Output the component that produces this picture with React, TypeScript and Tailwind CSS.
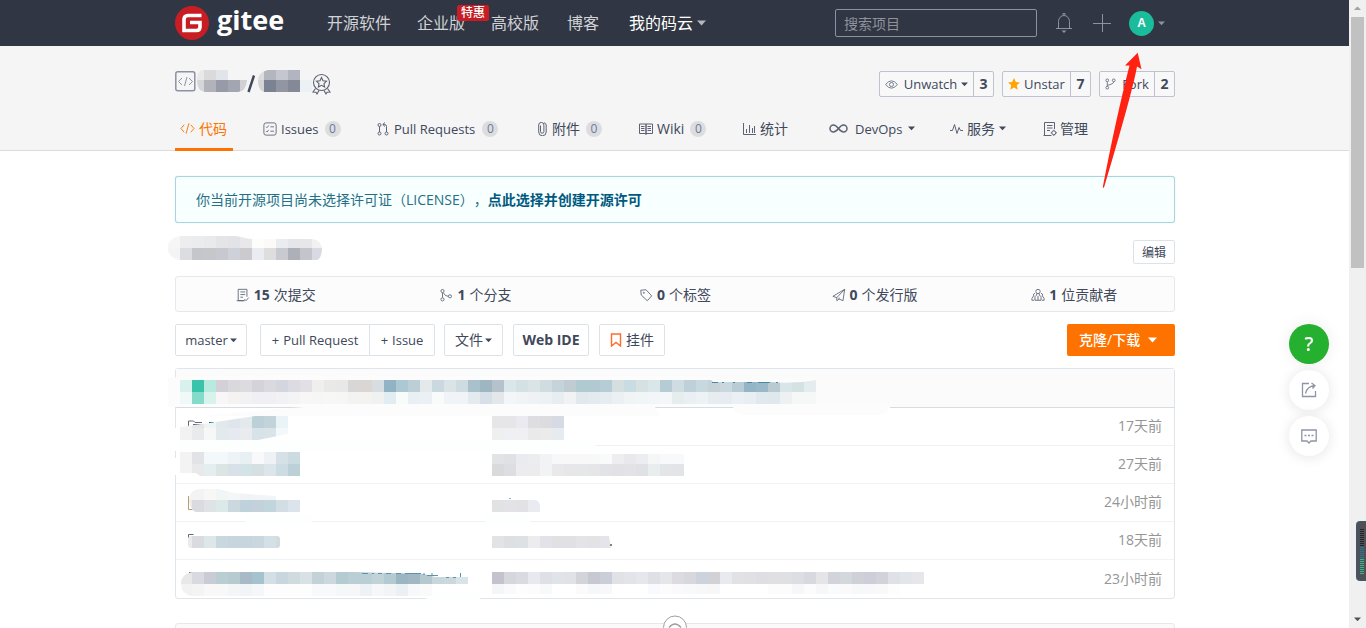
import React from "react";

type IconProps = { className?: string; children: React.ReactNode; box?: string };

function Icon({ className = "size-4", children, box = "0 0 16 16" }: IconProps) {
  return (
    <svg viewBox={box} className={`shrink-0 ${className}`} fill="none" stroke="currentColor" strokeWidth="1" aria-hidden="true">
      {children}
    </svg>
  );
}

function Caret({ className = "w-2" }: { className?: string }) {
  return (
    <svg viewBox="0 0 8 5" className={`shrink-0 ${className}`} fill="currentColor" aria-hidden="true">
      <path d="M0 .5h8L4 4.8z" />
    </svg>
  );
}

function Cells({ x, y, h = 12, colors }: { x: number; y: number; h?: number; colors: string }) {
  return (
    <g shapeRendering="crispEdges">
      {colors.split(" ").map((c, i) =>
        c === "-" ? null : <rect key={i} x={x + i * 12} y={y} width="12" height={h} fill={`#${c}`} />,
      )}
    </g>
  );
}

function CodeGlyph() {
  return <path d="M4.500 4L1 8l3.500 4M11.500 4L15 8l-3.500 4M9.500 2.500l-3 11" />;
}

const tabs = [
  {
    label: "Issues", count: 0, width: "w-[114px]", gap: "gap-1", size: "text-[13px]",
    icon: (
      <Icon className="size-[14px] text-[#5c6375]">
        <rect x="1" y="1" width="14" height="14" rx="2.500" />
        <path d="M3.500 5.500l1 1 2-2.500M3.500 10.500l1 1 2-2.500M8.500 5.500h4M8.500 10.500h4" />
      </Icon>
    ),
  },
  {
    label: "Pull Requests", count: 0, width: "w-[160px]", gap: "gap-[5px]", size: "text-[13px]",
    icon: (
      <Icon className="w-3 h-[14px] text-[#5c6375]" box="0 0 12 14">
        <circle cx="2.500" cy="3" r="1.500" /><circle cx="2.500" cy="11.500" r="1.500" /><circle cx="9.500" cy="11.500" r="1.500" />
        <path d="M2.500 4.500V10M9.500 10V4.500Q9.500 2.500 7.500 2.500H6M8 .5L5.800 2.500 8 4.500" />
      </Icon>
    ),
  },
  {
    label: "附件", count: 0, width: "w-[102px]", gap: "gap-1", size: "text-sm",
    icon: (
      <Icon className="w-[11px] h-[14px] text-[#5c6375]" box="0 0 11 14">
        <path d="M3.500 3.500v6a1.700 1.700 0 0 0 3.400 0V3a2.600 2.600 0 0 0-5.200 0v7a3.700 3.700 0 0 0 7.500 0V3Q9 1 7 .8" />
      </Icon>
    ),
  },
  {
    label: "Wiki", count: 0, width: "w-[103px]", gap: "gap-1", size: "text-sm",
    icon: (
      <Icon className="w-[14px] h-3 text-[#5c6375]" box="0 0 14 12">
        <path d="M.5 1h6.500v9.500H.5zM7 1h6.500v9.500H7zM2 3.500h3.500M2 5.500h3.500M2 7.500h3.500M8.500 3.500H12M8.500 5.500H12M8.500 7.500H12M7 10v2" />
      </Icon>
    ),
  },
  {
    label: "统计", width: "w-[87px]", gap: "gap-1", size: "text-sm",
    icon: (
      <Icon className="w-[14px] h-3 text-[#5c6375]" box="0 0 14 12">
        <path d="M1.500 0v11.500H14M4.500 10V6M7.500 10V2M10.500 10V5M12.500 10V3" />
      </Icon>
    ),
  },
  {
    label: "DevOps", menu: true, width: "w-[121px]", gap: "gap-[5px]", size: "text-[13px]",
    icon: (
      <Icon className="mr-0.5 w-[19px] h-[9px] text-[#5c6375]" box="0 0 19 9">
        <path strokeWidth="1.500" d="M9.500 4.500C7.500 2 6.500 1 4.500 1a3.500 3.500 0 0 0 0 7c2 0 3-1 5-3.500s3-3.500 5-3.500a3.500 3.500 0 0 1 0 7c-2 0-3-1-5-3.500z" />
      </Icon>
    ),
  },
  {
    label: "服务", menu: true, width: "w-[93px]", gap: "gap-1", size: "text-sm",
    icon: (
      <Icon className="w-[13px] h-3 text-[#5c6375]" box="0 0 13 12">
        <path d="M0 7.500h2.500l2-6 2.500 9 2-6 1.500 3H13" />
      </Icon>
    ),
  },
  {
    label: "管理", width: "w-[60px]", gap: "gap-[3px]", size: "text-sm",
    icon: (
      <Icon className="size-[14px] text-[#5c6375]" box="0 0 14 14">
        <path d="M11.500 7V.5H1.500v13H8M.5 13.500h8M4 3.500h5.500M4 6h5.500M4 8.500h3" />
        <circle cx="10.800" cy="10.800" r="2" />
        <path d="M10.800 7.800v1M10.800 12.800v1M7.800 10.800h1M12.800 10.800h1" />
      </Icon>
    ),
  },
];

const stats = [
  {
    n: 15, label: "次提交",
    icon: <path d="M12.500 10V1.500h-10v13H10M.8 14.500H9M5 4.500h5.500M5 7.500h5.500M5 10.500h3M9.500 12.500l2 2 3-3.500" />,
  },
  {
    n: 1, label: "个分支",
    icon: (
      <>
        <circle cx="4" cy="3.500" r="1.800" /><circle cx="4" cy="13" r="1.800" /><circle cx="12.500" cy="9.500" r="1.800" />
        <path d="M4 5.500V11M5 5.500Q7 9.500 10.500 9.500" />
      </>
    ),
  },
  {
    n: 0, label: "个标签",
    icon: <><path d="M2 2.500l6-.5 6.500 7-5 5.500L2.500 8z" /><circle cx="5.500" cy="5.500" r=".6" /></>,
  },
  { n: 0, label: "个发行版", icon: <path d="M14.500 1.500L1 9.500l4.500 1.500v3.500l2.500-2 4.500 2zM14.500 1.500L5.500 11M8 12.500v-1.500" /> },
  {
    n: 1, label: "位贡献者",
    icon: (
      <>
        <circle cx="8" cy="4" r="2.500" />
        <path d="M6.500 6.500v1.500L4.500 10v4h7v-4l-2-2V6.500M8 9v5" />
        <path d="M4.500 6Q2 6.500 3 9L1 12v2h2.500M11.500 6q2.500.5 1.500 3l2 3v2h-2.500" />
      </>
    ),
  },
];

const files = ["17天前", "27天前", "24小时前", "18天前", "23小时前"];

function TableMask() {
  return (
    <svg viewBox="168 368 1008 236" className="pointer-events-none absolute -left-2 -top-px h-[236px] w-[1008px]" aria-hidden="true">
      <path d="M168 378Q200 374 400 376H700Q712 377 714 382L816 380V404H892Q888 415 876 415H744Q736 415 733 407H655L660 416H200Q240 412 305 407H168z" fill="#fbfcfb" />
      <path d="M174 428H182V451H172zM168 458H180V475H174z" fill="#fff" />
      <path d="M222 441H595V451H180V441zM245 516H312V523H245zM418 593H480V601H430zM485 516H530V523H485z" fill="#fdfefe" />
      <path d="M188.500 426v-5h5l1.500 1.500h7M193 424.500h10" stroke="#6a6674" fill="none" />
      <path d="M209 422.500h5" stroke="#005980" />
      <path d="M188.500 496v13.500h4" stroke="#b99b72" fill="none" />
      <path d="M188.500 540v-5.500h5" stroke="#6a6674" fill="none" />
      <path d="M189 572.500h8" stroke="#6a6674" />
      <g>
        <Cells x={180} y={380} colors="d8f1ec 39c3aa b8eadf d3d1d7 d9d8dc dcdce0 d4d3d9 d9d9de d3d6df dcdbe1 e2e0e6 efefee eae9ea e8e8e8 d8d6d6 dad6d3 d6dee1 91b3c4 acc8d2 bccfd6 e4e9ec cad8df dae3e5 cedbe0 a9c1cb 9db6c0 b6c2cb d9e7eb d3e1e5 dae3e5 d0dde0 c5d4da bfcdd2 b1cad1 b1cad1 b7cdd5 d6dfdf c8dce3 d8e1e2 d9e7eb b6ccd5 cfdde3 bed1da c8d8df c5d2d8 c9d8df b7ccd4 93b5c6 9ab9c8 b9cbd1 d9e6e9 d4e2e3 e4ecee" />
        <Cells x={180} y={392} colors="eff9f7 84dbc9 daf2ec f8f6f7 f5f3f2 f2f2f3 f1eff3 f0eff3 f2f2f5 f4f4f7 f8f7f5 f6f6f7 f7f7f5 f6f6f4 f3f3f3 f4f3f0 f0f1f1 e2edf1 f7fbfa e9eff2 eaf0f3 f9fbfa f0f4f6 f0f4f7 e4ebef d7dfe9 e4e7ea f2f6f8 f1f4f5 eff2f5 edf1f3 e7eef1 f1f2f4 e1e9ee e4ebee e6edf0 ebf1f2 f0f4f4 f0f5f5 f3f6f8 f4f7f9 e5edef e9eff2 edf2f4 e6ecf0 e6ecf1 ebf0f4 e9eef3 e0eaee dfe8ec edf1f2 f6f8f7 f6f8f8" />
        <path d="M711 380H817Q795 384 770 382H713z" fill="#fbfcfb" />
        <path d="M712 382.500h6M722 382.500h2M733 382.500h2M747 382.500h5M758 382.500h12M776 382.500h2" stroke="#4c87a3" />
      </g>
      <clipPath id="name-1"><path d="M180 427L216 422L255 416H288V434L258 440H180z" /></clipPath>
      <g clipPath="url(#name-1)">
        <Cells x={180} y={416} colors="f2f2f3 e6e6e8 f0f4f4 e1e9ec dfe6eb e4e9ec bcd0d8 c3d3da eaf3f6" />
        <Cells x={180} y={428} colors="f2f2f2 e9eaec f6f8f7 e2eaec e6eaf0 e8ecef d7e3e8 d9e4e9 f3f8fa" />
      </g>
      <Cells x={492} y={416} colors="e6e6e8 e6e5e8 eaeaf0 dedddf dcdce0 d5dae4" />
      <Cells x={492} y={428} colors="efefef eff0f3 f0f0f3 ebeaeb ebebec e5ebee" />
      <clipPath id="name-2"><path d="M180 452H300V476H200L196 473H180z" /></clipPath>
      <g clipPath="url(#name-2)">
        <Cells x={180} y={452} colors="f3f3f4 e2e3e7 f3f8fa f3f8fa edf3f6 e9f0f3 f9f9fc eef2f4 d5e1e7 ccdbe2" />
        <Cells x={180} y={464} colors="f3f3f3 e9e9eb e5eeee dae5e4 d9e1e8 d4e3e7 d6dfe1 dce5e9 cddce3 bcd0d8" />
      </g>
      <Cells x={492} y={454} h={10} colors="e2e3e5 e0e1e4 eaebf0 ededef f1f3f5 f8f8f8 f8f8f8 f8f8f8 f8f8f8 f9fbfa eeeef0 e8e8ed ededf1 f5f6f6 f8f9fb f8f9fb" />
      <Cells x={492} y={464} colors="d9dadc dddee2 ececee ececef f2f3f5 e9e9eb e7e7e9 e6e7e9 e6e6e8 e2e3e7 e2e2e6 e3e3e7 e0e1e5 e8edee e4e5e9 e3e4e7" />
      <clipPath id="name-3"><path d="M189 500Q190 489 200 489H218L235 493L276 496V500H300V512H196Q190 510 189 500z" /></clipPath>
      <g clipPath="url(#name-3)">
        <Cells x={180} y={488} colors="f3f3f4 f3f3f4 f8f7f6 f0f5f6 f4f6f7 f2f3f6 f2f5f7 f2f5f7" />
        <Cells x={180} y={500} colors="ececec d9dbe0 e0e3e5 dce9e9 cbd8de bfd2db c5d1da c1d5dc d3dee4 dce3ea" />
      </g>
      <clipPath id="note-3"><path d="M492 500H536Q540 502 540 506V512H492z" /></clipPath>
      <g clipPath="url(#note-3)"><Cells x={492} y={500} colors="e1e2e2 e3e3e7 e2e2e4 eaebf0" /></g>
      <path d="M509 498.500h2" stroke="#8db5d8" />
      <clipPath id="name-4"><rect x="188" y="536" width="92" height="12" rx="3" /></clipPath>
      <g clipPath="url(#name-4)"><Cells x={180} y={536} colors="ebebed d9dbe1 dde7ea c9d8df c7d6dd c7d5dc cad7de d3e0e5 d2dcdd e7f5f7" /></g>
      <clipPath id="note-4"><path d="M492 536H609L611 548H492z" /></clipPath>
      <g clipPath="url(#note-4)"><Cells x={492} y={536} colors="e1e3e5 dce0e3 dde1e4 ececee e2e3e8 e1e1e4 e0e0e5 e3e3e8 e3e2e5 e4e4ea" /></g>
      <path d="M610 545h2" stroke="#8b7a88" strokeWidth="2" />
      <clipPath id="name-5"><path d="M192 572H355L424 574L435 577H468V584H445L440 596H192Q181 594 181 584T192 572z" /></clipPath>
      <g clipPath="url(#name-5)">
        <Cells x={180} y={572} colors="e8e8ea d9dae0 c9ccd4 b9ced3 b7cad0 a7bac6 a5c3cf d3dfe4 c8d7de d0dbe0 d8e1e5 c3d2d7 ccd8de b3cbd1 bacfd5 b9ced5 c2d2d9 b3cad2 9bb6c3 a1b8c4 b4c8cf c8d7dc ccd8de d9e4e8" />
        <Cells x={180} y={584} colors="f2f2f2 f4f4f4 f8f8f8 f8f8f9 f3f5f7 f1f5f8 f6f7f9 fdfdfd fdfdfd fdfdfd fdfdfd f8f9fa f8f9fa f5f8f9 f5f7f8 ecf2f5 f5f7f9 f2f5f6 ebf0f4 f7f8fa fafafa" />
      </g>
      <path d="M362 573.500h6M372 573.500h2M378 573.500h4M386 573.500h5M396 573.500h5M405 573.500h16M424 573v2M427 575.500h11M432 573v3M446 577.500h3M453 577.500h3M460.500 573v4" stroke="#5d93ab" />
      <Cells x={492} y={572} colors="c3c2cd d5d7dd dadbe0 e8e9ee dfe0e5 e0e4e8 e1e2e6 d3d4d9 c6c9d2 caced8 e1e2e6 e3e4e9 e6e7ec dfe0e5 e5e6ea dbdbe0 d7d8dd cdd3dd d1d1d6 e7ebf0 e1e2e4 e0e0e5 dfdfe3 e0e0e3 dfe0e3 dddee3 d8d8df e5e5e8 d1d5db d3d8dc d0d0d7 cccfda d2d2da dee2e7 e2e5ea e7e7eb" />
      <Cells x={492} y={584} h={10} colors="f5f6f8 fafafc fdfdfd fcfcfc f8f9fa - - fbfbfb f6f7f9 f8f8fa - - - f9fafd fcfcfc fafafc f8f9fa f8f8fa f7f7f8 - - - - fcfcfc fcfcfc f7f7f9 fcfcfc f6f7f8 fafbfc fafafb f7f8fa f8f8fa f9f9fa fdfdfd" />
    </svg>
  );
}

const btn = "flex h-8 cursor-pointer items-center justify-center border border-[#dce3e8] bg-white text-[#40485b] whitespace-nowrap";

function CountButton({ label, count, icon, menu, width }: { label: string; count: number; icon: React.ReactNode; menu?: boolean; width: string }) {
  return (
    <div className={`flex h-[26px] rounded-xs border border-[#bfc3cf] bg-[#f8f8f9] text-[#40485b] ${width}`}>
      <button type="button" className="flex flex-1 cursor-pointer items-center justify-center gap-1 whitespace-nowrap text-[13px] leading-5">
        {icon}
        <span>{label}</span>
        {menu && <Caret className="w-[7px]" />}
      </button>
      <a href="#" className="flex w-5 items-center justify-center border-l border-[#bfc3cf] text-sm font-bold">{count}</a>
    </div>
  );
}

export default function App() {
  return (
    <div className="flex h-screen overflow-hidden bg-white font-['Open_Sans','Noto_Sans_CJK_SC',sans-serif] text-sm text-[#40485b]">
      <div className="min-w-0 flex-1">
        <header className="h-[46px] bg-[#303643]">
          <div className="mx-auto flex h-full max-w-[1000px] items-center">
            <a href="#" className="flex w-[152px] items-center gap-2 text-white">
              <svg viewBox="0 0 34 34" className="size-[34px]" aria-hidden="true">
                <circle cx="17" cy="17" r="17" fill="#c71d23" />
                <path d="M26.500 9.500H13Q9 9.500 9 13.500V24.500H21.500Q25 24.500 25 21V16.500H15" fill="none" stroke="#fff" strokeWidth="3.600" />
              </svg>
              <span className="pb-1.5 text-[27px] leading-8 font-bold">gitee</span>
            </a>
            <nav className="flex items-center gap-[26px] text-base whitespace-nowrap text-[#d0d2d6]">
              <a href="#">开源软件</a>
              <a href="#" className="relative">
                企业版
                <span className="absolute -top-1.5 left-10 flex h-4 w-8 items-center justify-center rounded-xs bg-[#c71d23] text-xs font-medium text-white">特惠</span>
              </a>
              <a href="#">高校版</a>
              <a href="#" className="pl-0.5">博客</a>
              <a href="#" className="flex items-center gap-1 pl-1 text-white">
                我的码云
                <Caret className="w-[9px] text-[#b4b7bd]" />
              </a>
            </nav>
            <div className="ml-auto flex items-center pr-2.5">
              <input aria-label="搜索项目" placeholder="搜索项目" className="h-7 w-[202px] rounded-xs border border-[#8c92a4] bg-transparent px-2 text-sm text-white outline-none placeholder:text-[#8f929b]" />
              <button type="button" aria-label="通知" className="ml-[18px] cursor-pointer text-[#8c92a0]">
                <Icon className="h-5 w-[18px]" box="0 0 18 20">
                  <path d="M3.500 15.500V8.500a5.500 6 0 0 1 11 0v7M1 15.500h16M8 2V.5h2V2" />
                  <path d="M6.500 17.500h5L9 20z" fill="currentColor" stroke="none" />
                </Icon>
              </button>
              <button type="button" aria-label="新建" className="ml-5 cursor-pointer text-[#8c92a0]">
                <Icon className="size-[18px]" box="0 0 18 18"><path d="M0 9.500h18M9.500 0v18" /></Icon>
              </button>
              <button type="button" aria-label="账户" className="ml-[18px] flex cursor-pointer items-center gap-1 text-[#8c92a0]">
                <span className="flex size-[25px] items-center justify-center rounded-full bg-[#1abc9c] font-['Liberation_Sans',sans-serif] text-xs font-bold text-white">A</span>
                <Caret className="w-[7px]" />
              </button>
            </div>
          </div>
        </header>

        <section className="border-b border-[#dcdde0] bg-[#f5f5f5] pt-6">
          <div className="mx-auto max-w-[1000px]">
            <div className="flex h-7 items-start">
              <svg viewBox="175 70 160 28" className="h-7 w-40" aria-hidden="true">
                <rect x="175.800" y="71.800" width="19" height="19" rx="2" fill="none" stroke="#8c92a4" strokeWidth="1.500" />
                <path d="M182 78l-3.500 3.500L182 85M189 78l3.500 3.500L189 85M187 77l-2.500 9" fill="none" stroke="#8c92a4" />
                <clipPath id="owner"><path d="M205 69H228V80H247Q246 92 238 92H205Q197 91 197 80.500T205 69z" /></clipPath>
                <g clipPath="url(#owner)">
                  <Cells x={192} y={68} colors="e9e9ea d9dad9 e1e4e8" />
                  <Cells x={192} y={80} colors="d6d6d8 b2b3ba 979ba8 a3a5b1 d0d0d5" />
                </g>
                <path d="M248.500 92L254 75.500" stroke="#40485b" strokeWidth="2.400" />
                <clipPath id="repo"><path d="M268 70H300V80H312V92H264Q258 90 258 81T268 70z" /></clipPath>
                <g clipPath="url(#repo)">
                  <Cells x={252} y={68} colors="dcdcde b4b6be c4c7d0 b2b5c0" />
                  <Cells x={252} y={80} colors="d4d4d7 7b8291 9296a3 858896 ecf1f6" />
                </g>
                <g fill="none" stroke="#5a6070" strokeWidth="1.100">
                  <circle cx="321.500" cy="82.500" r="8" />
                  <path d="M321.500 77.500l1.500 3.200 3.500.5-2.500 2.400.6 3.400-3.100-1.700-3.100 1.700.6-3.400-2.500-2.400 3.500-.5z" />
                  <path d="M315.500 88.500L313 92l3 .3 1 1.700 2-3.500M327.500 88.500L330 92l-3 .3-1 1.700-2-3.500" />
                </g>
              </svg>
              <div className="mt-px ml-auto flex gap-2">
                <CountButton
                  label="Unwatch" count={3} menu width="w-[115px]"
                  icon={<Icon className="mr-0.5 h-[11px] w-[13px] text-[#6c7386]" box="0 0 14 12"><path d="M.5 6Q7-2 13.500 6 7 14 .5 6z" /><circle cx="7" cy="6" r="2.200" /></Icon>}
                />
                <CountButton
                  label="Unstar" count={7} width="w-[89px]"
                  icon={<Icon className="size-3" box="0 0 12 12"><path d="M6 0l1.800 4 4.200.4-3.200 2.900.9 4.400L6 9.500l-3.700 2.200.9-4.400L0 4.400 4.200 4z" fill="#ffa500" stroke="none" /></Icon>}
                />
                <CountButton
                  label="Fork" count={2} width="w-[76px]"
                  icon={<Icon className="mr-0.5 h-3 w-[11px] text-[#6c7386]" box="0 0 12 12"><circle cx="2.500" cy="2" r="1.500" /><circle cx="2.500" cy="10" r="1.500" /><circle cx="9.500" cy="2" r="1.500" /><path d="M2.500 3.500v5M9.500 3.500Q9.500 6 2.500 7.500" /></Icon>}
                />
              </div>
            </div>
            <nav className="relative mt-2.5 -mb-px flex h-[43px] whitespace-nowrap leading-5">
              <div className="w-[88px]">
                <a href="#" className="flex h-full w-[58px] items-center gap-1 border-b-3 border-[#fe7300] pt-px pl-[5px] text-[#fe7300]">
                  <Icon className="size-[15px]"><CodeGlyph /></Icon>代码
                </a>
              </div>
              {tabs.map((t) => (
                <a key={t.label} href="#" className={`flex h-full items-center pb-0.5 ${t.width} ${t.gap}`}>
                  {t.icon}
                  <span className={t.size}>{t.label}</span>
                  {t.count !== undefined && (
                    <span className="ml-0.5 flex size-4 items-center justify-center rounded-full bg-[#dcdddf] text-xs text-[#6c7a9c]">{t.count}</span>
                  )}
                  {t.menu && <Caret className="w-[7px]" />}
                </a>
              ))}
            </nav>
          </div>
        </section>

        <main className="mx-auto max-w-[1000px] pt-[25px]">
          <div className="flex h-[47px] items-center rounded-[3px] border border-[#a9d5de] bg-[#f8ffff] px-5 text-[#276f86] shadow-[0_0_1px_#a9d5de]">
            <p className="leading-5 [text-spacing-trim:space-all]">
              你当前开源项目尚未选择许可证（LICENSE），<a href="#" className="font-bold text-[#005980]">点此选择并创建开源许可</a>
            </p>
          </div>

          <div className="mt-[13px] flex h-7 items-end justify-between">
            <svg viewBox="168 236 156 28" className="-ml-[7px] h-7 w-[156px]" aria-hidden="true">
              <clipPath id="desc"><path d="M180 236H236L250 239H312Q322 240 322 250 321 260 316 260H180Q168 258 168 248T180 236z" /></clipPath>
              <g clipPath="url(#desc)">
                <Cells x={168} y={236} colors="f6f6f6 ededef ebecee e9eaec e5e5e8 e2e3e7 e8e8ea fdfdfc fcf9f8 ebecef e5e6ea e7e7ea f1f1f2" />
                <Cells x={168} y={248} colors="f4f4f4 dcdde0 c4c6cb c6c7cb c8c8d0 cfd1da cbcacf e9edf1 dedede c9cad0 aeb0b9 c3c5cb d7dae2" />
              </g>
            </svg>
            <button type="button" className="h-6 w-[42px] cursor-pointer rounded-xs border border-[#dce3e8] bg-white text-xs leading-6">编辑</button>
          </div>

          <ul className="mt-3 grid h-9 grid-cols-5 rounded-[3px] border border-[#e3e9ed] bg-[#fcfcfc] pt-0.5">
            {stats.map((s) => (
              <li key={s.label} className="flex items-center justify-center">
                <a href="#" className="flex items-center gap-1">
                  <Icon className="size-[14px] text-[#5c6375]">{s.icon}</Icon>
                  <b>{s.n}</b>
                  <span>{s.label}</span>
                </a>
              </li>
            ))}
          </ul>

          <div className="mt-3 flex">
            <button type="button" className={`${btn} w-[72px] gap-0.5 rounded-xs text-[13px]`}>master<Caret className="w-[7px]" /></button>
            <button type="button" className={`${btn} ml-[13px] w-[110px] gap-1 rounded-l-xs text-[13px]`}><span>+</span> Pull Request</button>
            <button type="button" className={`${btn} -ml-px w-[66px] gap-1 rounded-r-xs text-[13px]`}><span>+</span> Issue</button>
            <button type="button" className={`${btn} ml-[9px] w-[59px] gap-0.5 rounded-xs text-sm`}>文件<Caret className="w-[7px]" /></button>
            <button type="button" className={`${btn} ml-2.5 w-[76px] rounded-xs text-sm font-bold`}>Web IDE</button>
            <button type="button" className={`${btn} ml-2.5 w-[66px] gap-1 rounded-xs text-sm`}>
              <Icon className="h-[14px] w-3 text-[#fe6b2c]" box="0 0 12 14"><path strokeWidth="1.400" d="M1.500 1h9v12L6 9.500 1.500 13z" /></Icon>
              挂件
            </button>
            <button type="button" className="ml-auto flex h-8 w-[108px] cursor-pointer items-center gap-2 rounded-xs bg-[#fe7300] pl-3 text-sm font-medium text-white">
              克隆/下载<Caret className="w-[9px]" />
            </button>
          </div>

          <div className="relative mt-3 rounded-[3px] border border-[#dfe6eb]">
            <table className="w-full border-collapse">
              <thead>
                <tr className="h-[38px] border-b border-[#d5dde3] bg-[#fbfbfb]">
                  <th aria-label="文件" className="w-[316px]" />
                  <th aria-label="提交" />
                  <th aria-label="时间" className="w-40" />
                </tr>
              </thead>
              <tbody>
                {files.map((f) => (
                  <tr key={f} className="h-[38px] border-b border-[#f0f2f4] last:h-[39px] last:border-0">
                    <td /><td />
                    <td className="pr-3 text-right leading-5 text-[#959595]">{f}</td>
                  </tr>
                ))}
              </tbody>
            </table>
            <TableMask />
          </div>

          <div className="relative mt-6 h-20 rounded-[3px] border border-[#e3e9ed] bg-[#fafafa]">
            <button type="button" aria-label="展开" className="absolute -top-[9px] left-1/2 size-6 -translate-x-1/2 cursor-pointer rounded-full bg-white text-[#a0a0a0]">
              <Icon className="size-6" box="0 0 24 24"><circle cx="12" cy="12.500" r="11.500" /><path strokeWidth="1.300" d="M6 12.500Q12 5.500 18 12.500" /></Icon>
            </button>
          </div>
        </main>
      </div>

      <div className="z-10 -ml-px flex w-[17px] shrink-0 flex-col items-center justify-between bg-[#f0f0f0]">
        <div className="flex flex-col items-center">
          <span className="flex h-[17px] items-center text-[#a3a3a3]"><Caret className="w-[7px] rotate-180" /></span>
          <span className="h-[251px] w-[13px] bg-[#c1c1c1]" />
        </div>
        <span className="flex h-[18px] items-center text-[#505050]"><Caret className="w-[7px]" /></span>
      </div>

      <svg viewBox="0 0 10 60" className="fixed right-0 bottom-[47px] z-20 h-[60px] w-2.5" aria-hidden="true">
        <rect x=".5" y=".5" width="14" height="59" rx="3" fill="#505156" stroke="#355c72" />
        {Array.from({ length: 23 }, (_, i) => (
          <rect key={i} x="4" y={8 + i * 2} width="4" height="1" fill={i < 9 ? "#25262a" : i < 15 ? "#2f7391" : "#34b98c"} />
        ))}
      </svg>

      <aside className="fixed top-[324px] right-[37px] flex flex-col gap-1.5">
        <button type="button" aria-label="帮助" className="size-10 cursor-pointer rounded-full bg-[#25b02f] text-xl leading-none font-semibold text-white shadow-[0_0_16px_rgba(0,0,0,0.08)]">?</button>
        <button type="button" aria-label="分享" className="flex size-10 cursor-pointer items-center justify-center rounded-full bg-white text-[#8f94a8] shadow-[0_1px_14px_rgba(0,0,0,0.11)]">
          <Icon className="size-4"><path strokeWidth="1.300" d="M8 1.500H1.500v13h13V9M4.500 11.500Q6 4.500 13.500 3.500M10.500 1l3.500 2.500L11.500 6.500" /></Icon>
        </button>
        <button type="button" aria-label="反馈" className="flex size-10 cursor-pointer items-center justify-center rounded-full bg-white text-[#8f94a8] shadow-[0_1px_14px_rgba(0,0,0,0.11)]">
          <Icon className="size-4">
            <path strokeWidth="1.300" d="M.8 2h14.400v11H10l-2 2-2-2H.8z" />
            <path strokeWidth="1.500" d="M3.500 7.500h2M7 7.500h2M10.500 7.500h2" />
          </Icon>
        </button>
      </aside>

      <svg viewBox="1100 50 46 140" className="pointer-events-none fixed top-[50px] right-[220px] h-[140px] w-[46px]" aria-hidden="true">
        <path d="M1137.700 52.700L1141.500 69.200 1137 66.500Q1133 90 1104 187.500L1103 187.700 1102.800 187Q1116 118 1129.500 65.500L1125 65.500z" fill="#ff2213" />
      </svg>
    </div>
  );
}
